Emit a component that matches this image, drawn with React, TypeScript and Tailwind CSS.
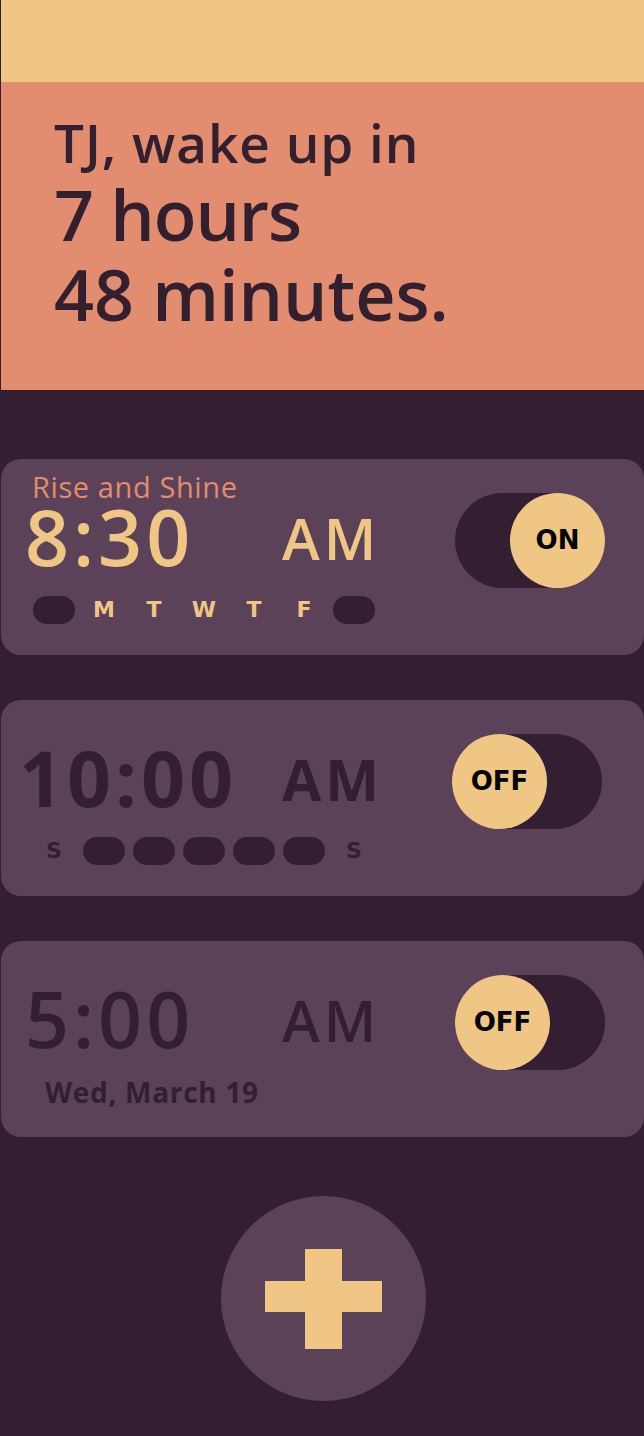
const DARK = "text-[#331f31]";

function Toggle({ on }: { on: boolean }) {
  return (
    <div
      className={`flex h-[95px] w-[150px] rounded-full bg-[#331f31] ${on ? "justify-end" : "justify-start"}`}
    >
      <div className="flex h-[95px] w-[95px] items-center justify-center rounded-full bg-[#efc684]">
        <span className="font-['DejaVu_Sans',sans-serif] text-[26px] font-bold text-black">
          {on ? "ON" : "OFF"}
        </span>
      </div>
    </div>
  );
}

function Days({ labels, active }: { labels: string[]; active: boolean[] }) {
  return (
    <div className="grid h-[28px] grid-cols-[repeat(7,50px)]">
      {labels.map((d, i) => (
        <div key={i} className="flex items-center justify-center">
          {active[i] ? (
            <span
              className={`font-['DejaVu_Sans',sans-serif] text-[22px] font-bold leading-none ${
                i === 0 || i === 6 ? DARK : "text-[#efc684]"
              }`}
            >
              {d}
            </span>
          ) : (
            <div className="h-[28px] w-[42px] rounded-full bg-[#331f31]" />
          )}
        </div>
      ))}
    </div>
  );
}

function AlarmCard({
  title,
  time,
  on,
  children,
  timeBox = "-ml-[4px] w-[257px] font-semibold",
  amBox = "font-semibold",
  pr = "pr-[39px]",
}: {
  title?: string;
  time: string;
  on: boolean;
  children: React.ReactNode;
  timeBox?: string;
  amBox?: string;
  pr?: string;
}) {
  const tone = on ? "text-[#efc684]" : DARK;
  return (
    <div className={`flex justify-between rounded-[20px] bg-[#5c4258] pb-[31px] pl-[28px] pt-[13px] ${pr}`}>
      <div className="flex flex-col">
        <div className="h-[30px] pl-[3px] text-[29px] font-medium leading-[30px] tracking-[0.6px] text-[#e28c70]">
          {title}
        </div>
        <div className={`mt-[5px] flex h-[60px] items-start ${tone}`}>
          <span className={`text-[77px] leading-[60px] tracking-[4px] ${timeBox}`}>{time}</span>
          <span className={`mt-px text-[57px] leading-[60px] tracking-[4px] ${amBox}`}>AM</span>
        </div>
        <div className="mt-[29px]">{children}</div>
      </div>
      <div className="pt-[21px]">
        <Toggle on={on} />
      </div>
    </div>
  );
}

export default function App() {
  return (
    <div className="min-h-[1436px] w-full border-l border-[#331f31] bg-[#331f31] font-['Open_Sans',sans-serif] font-semibold">
      <div className="h-[82px] bg-[#efc684]" />
      <div className="h-[308px] bg-[#e28c70] pl-[53px] pt-[29px] text-[#33202f]">
        <div className="text-[53px] leading-[63px] tracking-[1px]">TJ, wake up in</div>
        <div className="text-[70px] leading-[80px] tracking-[-1px]">7 hours</div>
        <div className="text-[70px] leading-[80px]">48 minutes.</div>
      </div>

      <div className="flex flex-col gap-[45px] pt-[69px]">
        <AlarmCard title="Rise and Shine" time="8:30" on>
          <Days
            labels={["", "M", "T", "W", "T", "F", ""]}
            active={[false, true, true, true, true, true, false]}
          />
        </AlarmCard>
        <AlarmCard
          time="10:00"
          on={false}
          timeBox="-ml-[10px] w-[263px] font-bold"
          amBox="font-bold"
          pr="pr-[42px]"
        >
          <Days
            labels={["S", "", "", "", "", "", "S"]}
            active={[true, false, false, false, false, false, true]}
          />
        </AlarmCard>
        <AlarmCard time="5:00" on={false}>
          <div className={`h-[28px] pl-[16px] text-[28px] font-bold leading-[28px] tracking-[0.7px] ${DARK}`}>
            Wed, March 19
          </div>
        </AlarmCard>
      </div>

      <div className="flex justify-center pl-[2px] pt-[59px]">
        <button className="flex h-[205px] w-[205px] items-center justify-center rounded-full bg-[#5c4258]">
          <svg width="117" height="100" viewBox="0 0 117 100">
            <rect x="0" y="32" width="117" height="31" fill="#efc684" />
            <rect x="40" y="0" width="37" height="100" fill="#efc684" />
          </svg>
        </button>
      </div>
    </div>
  );
}
